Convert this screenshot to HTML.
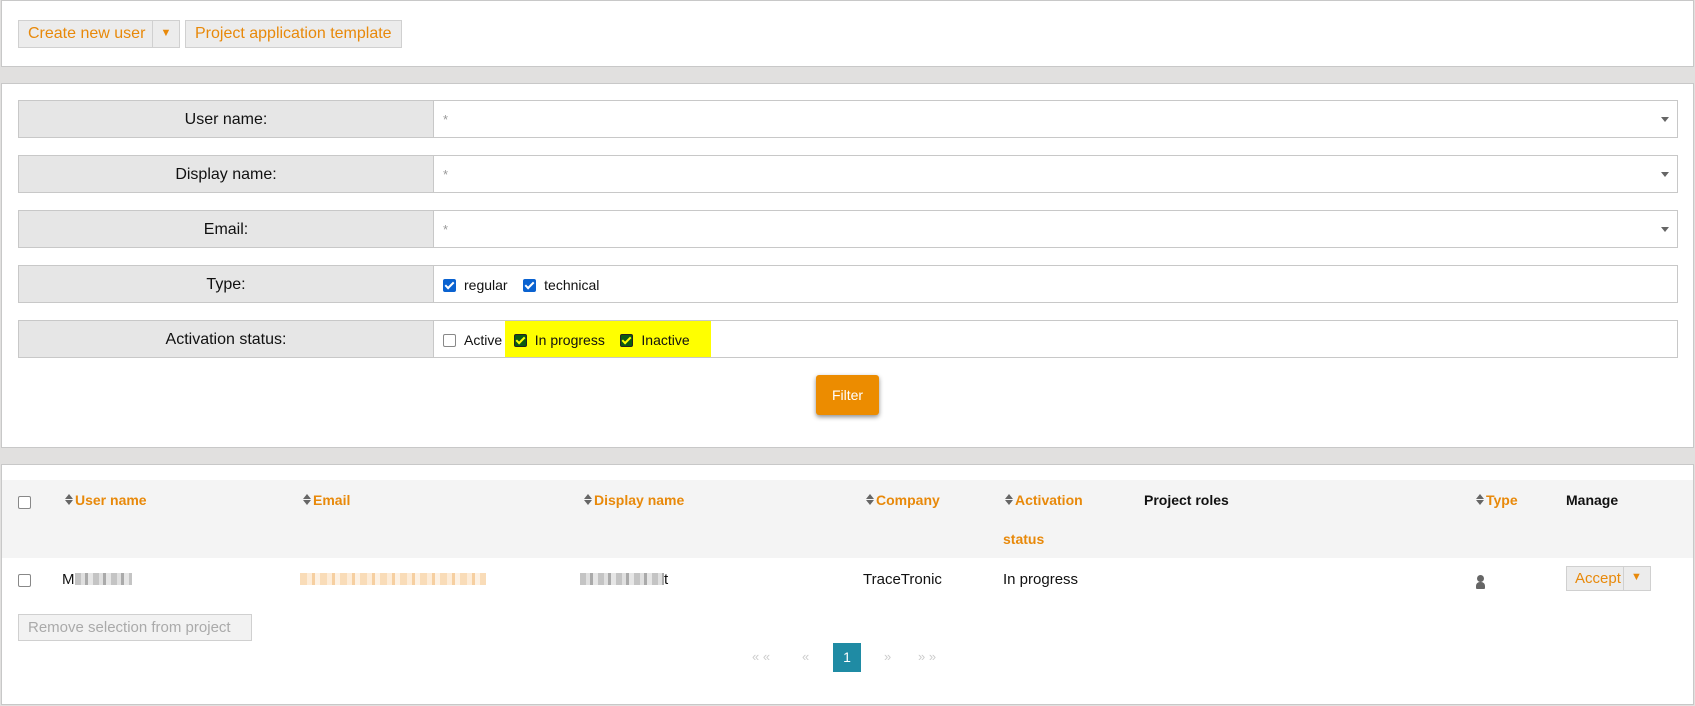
<!DOCTYPE html>
<html><head><style>
*{box-sizing:border-box;margin:0;padding:0}
body{width:1695px;height:706px;background:#e1e0df;font-family:"Liberation Sans",Arial,sans-serif;position:relative;overflow:hidden}
.p{position:absolute;left:1px;right:1px;background:#fff;border:1px solid #c8c8c8}
.a{position:absolute}
.btn{position:absolute;background:#ececec;border:1px solid #d0d0d0;color:#e8890a;font-size:16px;line-height:25px;padding:0 9px;white-space:nowrap}
.row{position:absolute;left:18px;width:1660px;height:38px;border:1px solid #c8c8c8;background:#fff}
.row .l{position:absolute;left:0;top:0;bottom:0;width:415px;background:#e6e6e6;border-right:1px solid #c8c8c8;text-align:center;line-height:38px;font-size:16px;color:#111}
.row .s{position:absolute;left:424px;top:11px;color:#999;font-size:13px}
.row .c{position:absolute;right:8px;top:16px;width:0;height:0;border-left:4px solid transparent;border-right:4px solid transparent;border-top:5px solid #666}
.cb{display:inline-block;width:13px;height:13px;border-radius:2px;vertical-align:-2px;margin-right:8px;position:relative}
.cb.on{background:#0a62d0}
.cb.on:after{content:"";position:absolute;left:4px;top:1px;width:3px;height:7px;border:solid #fff;border-width:0 2px 2px 0;transform:rotate(45deg)}
.cb.g{background:#0b5a12;border:1px solid #222}
.cb.g:after{content:"";position:absolute;left:3px;top:0px;width:3px;height:7px;border:solid #ff0;border-width:0 2px 2px 0;transform:rotate(45deg)}
.cb.off{border:1.5px solid #888;background:#fff}
.opt{font-size:14px;color:#111}
.th{position:absolute;top:492px;font-size:14px;font-weight:bold;color:#e8890a}
.th.k{color:#111}
.sort{display:inline-block;width:8px;height:11px;position:relative;margin-right:2px;vertical-align:0}
.sort:before{content:"";position:absolute;left:0;top:0;border-left:4px solid transparent;border-right:4px solid transparent;border-bottom:5px solid #666}
.sort:after{content:"";position:absolute;left:0;top:6px;border-left:4px solid transparent;border-right:4px solid transparent;border-top:5px solid #666}
.td{position:absolute;top:571px;font-size:15px;color:#111}
.blur{display:inline-block;height:12px;vertical-align:-1px;background:repeating-linear-gradient(90deg,#c4c4c4 0 6px,#e0e0e0 6px 10px,#aaa 10px 13px,#e6e6e6 13px 18px)}
.pg{position:absolute;top:649px;font-size:13px;color:#ccc}
</style></head><body>
<div class="p" style="top:0;height:67px">
</div>
<div class="btn" style="left:18px;top:20px;height:28px;padding-right:33px">Create new user</div>
<div class="btn" style="left:152px;top:20px;height:28px;width:28px;padding:0;text-align:center;font-size:11px">▼</div>
<div class="btn" style="left:185px;top:20px;height:28px">Project application template</div>

<div class="p" style="top:83px;height:365px"></div>
<div class="row" style="top:100px"><div class="l">User name:</div><div class="s">*</div><div class="c"></div></div>
<div class="row" style="top:155px"><div class="l">Display name:</div><div class="s">*</div><div class="c"></div></div>
<div class="row" style="top:210px"><div class="l">Email:</div><div class="s">*</div><div class="c"></div></div>
<div class="row" style="top:265px"><div class="l">Type:</div>
<div class="a opt" style="left:424px;top:11px"><span class="cb on"></span>regular&nbsp;&nbsp;&nbsp;&nbsp;<span class="cb on"></span>technical</div></div>
<div class="row" style="top:320px"><div class="l">Activation status:</div>
<div class="a" style="left:486px;top:0;width:206px;height:36px;background:#ffff00"></div>
<div class="a opt" style="left:424px;top:11px"><span class="cb off"></span>Active&nbsp;&nbsp;&nbsp;<span class="cb g"></span>In progress&nbsp;&nbsp;&nbsp;&nbsp;<span class="cb g"></span>Inactive</div></div>
<div class="a" style="left:816px;top:375px;width:63px;height:40px;background:#ec8c00;border-radius:3px;box-shadow:0 2px 5px rgba(0,0,0,.45);color:#fff;font-size:14px;text-align:center;line-height:40px">Filter</div>

<div class="p" style="top:464px;height:241px"></div>
<div class="a" style="left:2px;right:2px;top:480px;height:78px;background:#f4f4f4"></div>
<div class="a" style="left:18px;top:494px"><span class="cb off"></span></div>
<div class="th" style="left:65px"><span class="sort" style=""></span>User name</div>
<div class="th" style="left:303px"><span class="sort"></span>Email</div>
<div class="th" style="left:584px"><span class="sort"></span>Display name</div>
<div class="th" style="left:866px"><span class="sort"></span>Company</div>
<div class="th" style="left:1005px"><span class="sort"></span>Activation</div>
<div class="th" style="left:1003px;top:531px">status</div>
<div class="th k" style="left:1144px">Project roles</div>
<div class="th" style="left:1476px"><span class="sort"></span>Type</div>
<div class="th k" style="left:1566px">Manage</div>

<div class="a" style="left:18px;top:572px"><span class="cb off"></span></div>
<div class="td" style="left:62px">M<span class="blur" style="width:57px"></span></div>
<div class="td" style="left:300px"><span class="blur" style="width:186px;background:repeating-linear-gradient(90deg,#f9dcb8 0 7px,#fdecd8 7px 12px,#f6cfa0 12px 15px,#fdf1e3 15px 20px)"></span></div>
<div class="td" style="left:580px"><span class="blur" style="width:84px"></span>t</div>
<div class="td" style="left:863px">TraceTronic</div>
<div class="td" style="left:1003px">In progress</div>
<div class="a" style="left:1476px;top:575px;width:9px;height:14px">
<div style="width:7px;height:7px;border-radius:50%;background:#666;margin-left:1px"></div>
<div style="width:9px;height:7px;border-radius:4px 4px 1px 1px;background:#666"></div></div>
<div class="btn" style="left:1566px;top:566px;height:25px;line-height:23px;font-size:15px;padding:0 8px;width:85px">Accept</div>
<div class="a" style="left:1623px;top:567px;width:1px;height:23px;background:#d0d0d0"></div>
<div class="a" style="left:1631px;top:571px;color:#e8890a;font-size:11px">▼</div>

<div class="btn" style="left:18px;top:614px;height:27px;width:234px;color:#aaa;background:#f2f2f2;font-size:15px">Remove selection from project</div>
<div class="pg" style="left:752px">« «</div>
<div class="pg" style="left:802px">«</div>
<div class="a" style="left:833px;top:643px;width:28px;height:29px;background:#1f8ba4;color:#fff;font-size:14px;text-align:center;line-height:29px">1</div>
<div class="pg" style="left:884px">»</div>
<div class="pg" style="left:918px">» »</div>
</body></html>
